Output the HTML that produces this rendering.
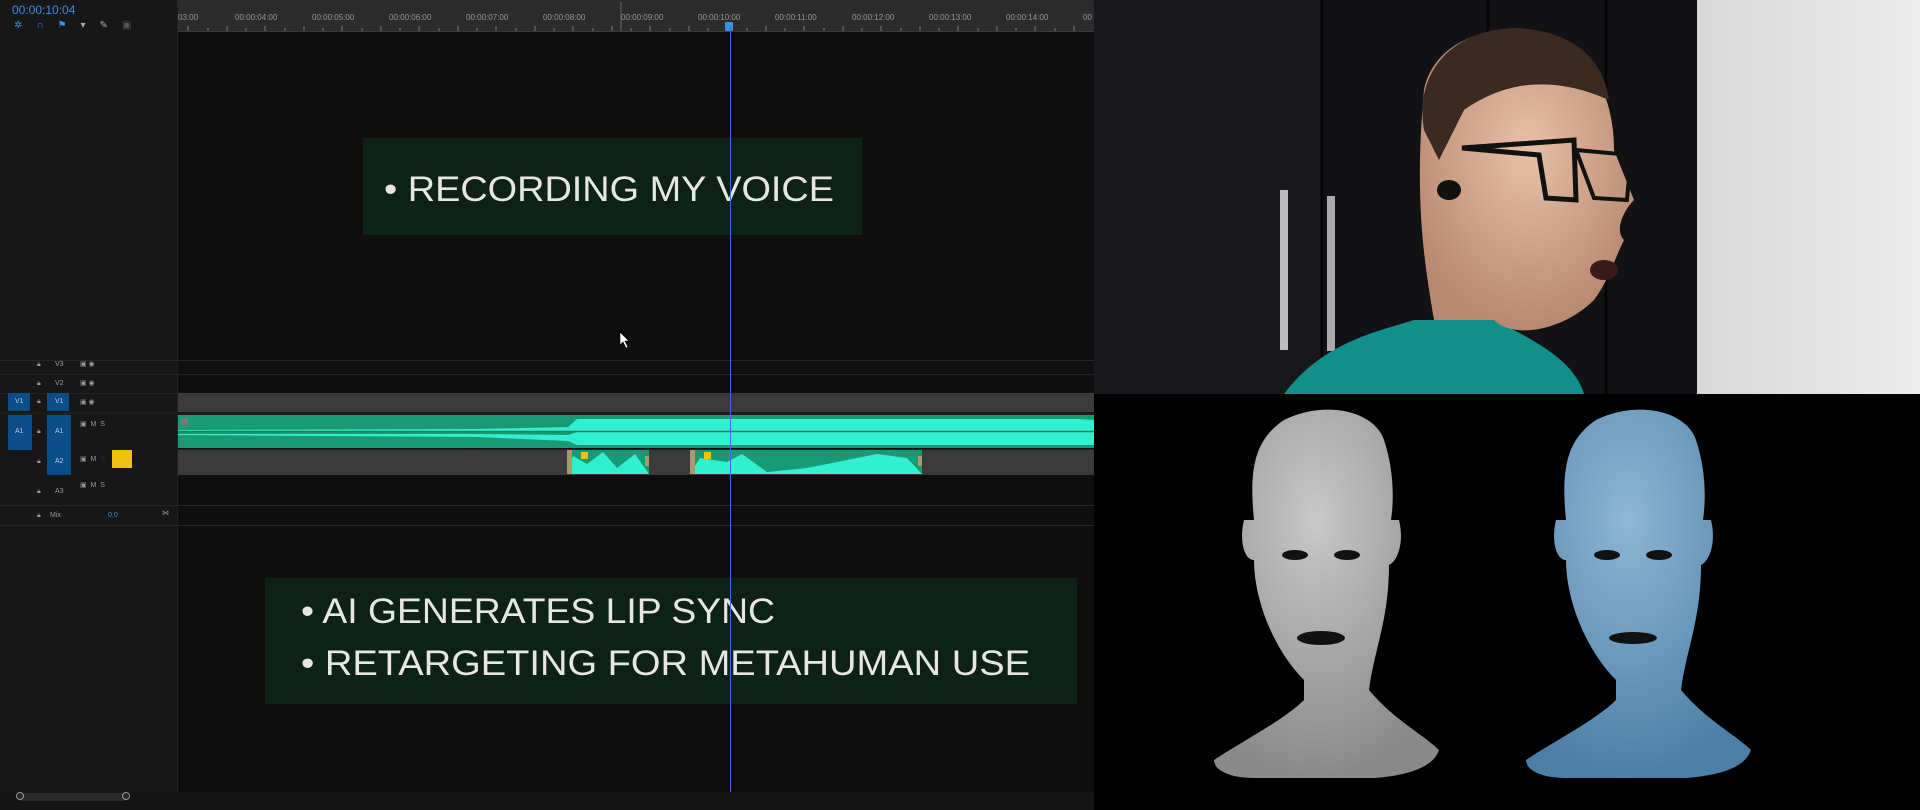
<!DOCTYPE html>
<html><head><meta charset="utf-8"><style>
*{margin:0;padding:0;box-sizing:border-box}
body{width:1920px;height:810px;background:#0e0e0e;overflow:hidden;position:relative;font-family:"Liberation Sans",sans-serif}
.abs{position:absolute}
</style></head><body>
<div class="abs" style="left:0;top:0;width:178px;height:810px;background:#171717;border-right:1px solid #222"></div>
<div class="abs" style="left:12px;top:3px;color:#3b8fe0;font-size:12px">00:00:10:04</div>
<div class="abs" style="left:14px;top:20px;color:#3b8fe0;font-size:10px;letter-spacing:14px">✲∩⚑<span style="color:#aaa">▾✎</span><span style="color:#555">▣</span></div>
<div class="abs" style="left:178px;top:0;width:916px;height:32px;background:#2b2b2b;border-bottom:1px solid #3a3a3a"></div>
<svg class="abs" style="left:178px;top:0" width="916" height="32">
<g fill="#999" font-size="8" font-family="Liberation Sans">
<text x="0" y="20">03:00</text><text x="57" y="20">00:00:04:00</text><text x="134" y="20">00:00:05:00</text><text x="211" y="20">00:00:06:00</text><text x="288" y="20">00:00:07:00</text><text x="365" y="20">00:00:08:00</text><text x="443" y="20">00:00:09:00</text><text x="520" y="20">00:00:10:00</text><text x="597" y="20">00:00:11:00</text><text x="674" y="20">00:00:12:00</text><text x="751" y="20">00:00:13:00</text><text x="828" y="20">00:00:14:00</text><text x="905" y="20">00</text>
</g>
<g stroke="#777"><path d="M10 26v5M30 28v3M49 26v5M68 28v3M87 26v5M107 28v3M126 26v5M145 28v3M164 26v5M184 28v3M203 26v5M222 28v3M241 26v5M261 28v3M280 26v5M299 28v3M318 26v5M338 28v3M357 26v5M376 28v3M395 26v5M415 28v3M434 26v5M453 28v3M472 26v5M492 28v3M511 26v5M530 28v3M549 26v5M569 28v3M588 26v5M607 28v3M626 26v5M646 28v3M665 26v5M684 28v3M703 26v5M723 28v3M742 26v5M761 28v3M780 26v5M800 28v3M819 26v5M838 28v3M857 26v5M877 28v3M896 26v5"/></g>
<line x1="443" y1="2" x2="443" y2="31" stroke="#666"/>
<rect x="547" y="22" width="8" height="9" rx="1" fill="#3b8fe0"/>
</svg>
<div class="abs" style="left:0;top:360px;width:1094px;height:1px;background:#262626"></div>
<div class="abs" style="left:0;top:374px;width:1094px;height:1px;background:#222"></div>
<div class="abs" style="left:0;top:393px;width:1094px;height:1px;background:#222"></div>
<div class="abs" style="left:178px;top:393px;width:916px;height:19px;background:#3a3a3a"></div>
<div class="abs" style="left:0;top:412px;width:1094px;height:3px;background:#1c1c1c"></div>
<div class="abs" style="left:178px;top:415px;width:916px;height:33px;background:#1a9a74"></div>
<svg class="abs" style="left:178px;top:415px" width="916" height="33">
<path d="M0 15 L300 14 L390 12 L399 4 L900 4 L916 5 V16 H0Z" fill="#30f0d0"/>
<path d="M0 18 L0 19 L300 19 L390 20 L399 17 L916 17 V30 L399 30 L390 26 L300 22 L0 20Z" fill="#30f0d0"/>
<line x1="0" y1="16.5" x2="916" y2="16.5" stroke="#138060" stroke-width="1.5"/>
<rect x="3" y="3" width="7" height="7" fill="#777"/>
</svg>
<div class="abs" style="left:178px;top:450px;width:916px;height:25px;background:#3a3a3a"></div>
<div class="abs" style="left:178px;top:449px;width:916px;height:1px;background:#222"></div>
<svg class="abs" style="left:567px;top:450px" width="360" height="25">
<rect x="0" y="0" width="82" height="24" fill="#1a9a74"/>
<path d="M0 24 L6 6 L20 14 L36 2 L50 18 L68 4 L82 24Z" fill="#30f0d0"/>
<rect x="123" y="0" width="232" height="24" fill="#1a9a74"/>
<path d="M123 24 L133 8 L160 12 L175 4 L200 22 L240 18 L280 10 L310 4 L340 8 L355 24Z" fill="#30f0d0"/>
<rect x="0" y="0" width="5" height="24" fill="#a89a6a"/><rect x="78" y="6" width="4" height="10" fill="#a89a6a"/>
<rect x="123" y="0" width="5" height="24" fill="#a89a6a"/><rect x="351" y="6" width="4" height="10" fill="#a89a6a"/>
<rect x="14" y="2" width="7" height="7" fill="#f0c010"/><rect x="137" y="2" width="7" height="7" fill="#f0c010"/>
</svg>
<div class="abs" style="left:0;top:505px;width:1094px;height:1px;background:#262626"></div>
<div class="abs" style="left:0;top:525px;width:1094px;height:1px;background:#262626"></div>
<div class="abs" style="left:8px;top:393px;width:22px;height:18px;background:#0a4d88"></div>
<div class="abs" style="left:47px;top:393px;width:22px;height:18px;background:#0a4d88"></div>
<div class="abs" style="left:8px;top:415px;width:24px;height:35px;background:#0a4d88"></div>
<div class="abs" style="left:47px;top:415px;width:24px;height:60px;background:#0a4d88"></div>
<div class="abs" style="left:112px;top:450px;width:20px;height:18px;background:#f0c010"></div>
<div class="abs" style="left:0;top:0;font-size:7px;color:#999;width:178px;height:810px">
<span class="abs" style="left:37px;top:361px">🔒︎</span><span class="abs" style="left:55px;top:361px">V3</span><span class="abs" style="left:80px;top:360px">▣ ◉</span>
<span class="abs" style="left:37px;top:380px">🔒︎</span><span class="abs" style="left:55px;top:380px">V2</span><span class="abs" style="left:80px;top:379px">▣ ◉</span>
<span class="abs" style="left:15px;top:398px;color:#bcd">V1</span><span class="abs" style="left:37px;top:398px">🔒︎</span><span class="abs" style="left:55px;top:398px;color:#bcd">V1</span><span class="abs" style="left:80px;top:398px">▣ ◉</span>
<span class="abs" style="left:15px;top:428px;color:#bcd">A1</span><span class="abs" style="left:37px;top:428px">🔒︎</span><span class="abs" style="left:55px;top:428px;color:#bcd">A1</span><span class="abs" style="left:80px;top:420px">▣ &nbsp;M &nbsp;S</span>
<span class="abs" style="left:37px;top:458px">🔒︎</span><span class="abs" style="left:55px;top:458px;color:#bcd">A2</span><span class="abs" style="left:80px;top:455px">▣ &nbsp;M &nbsp;<span style="color:#333">S</span></span>
<span class="abs" style="left:37px;top:488px">🔒︎</span><span class="abs" style="left:55px;top:488px">A3</span><span class="abs" style="left:80px;top:481px">▣ &nbsp;M &nbsp;S</span>
<span class="abs" style="left:37px;top:512px">🔒︎</span><span class="abs" style="left:50px;top:512px">Mix</span><span class="abs" style="left:108px;top:512px;color:#3b8fe0">0,0</span><span class="abs" style="left:162px;top:509px">⋈</span>
</div>
<div class="abs" style="left:0;top:792px;width:1094px;height:18px;background:#141414"></div>
<div class="abs" style="left:18px;top:793px;width:110px;height:8px;background:#2a2a2a;border-radius:4px"></div>
<div class="abs" style="left:16px;top:792px;width:8px;height:8px;border:1px solid #999;border-radius:50%"></div>
<div class="abs" style="left:122px;top:792px;width:8px;height:8px;border:1px solid #999;border-radius:50%"></div>
<svg class="abs" style="left:0;top:0" width="1094" height="810">
<rect x="363" y="138" width="499" height="97" fill="#0e2116"/>
<rect x="265" y="578" width="812" height="126" fill="#0e2116"/>
<g fill="#e6e6e6" font-family="Liberation Sans" font-size="35">
<text x="384" y="201" textLength="450" lengthAdjust="spacingAndGlyphs">• RECORDING MY VOICE</text>
<text x="301" y="623" textLength="474" lengthAdjust="spacingAndGlyphs">• AI GENERATES LIP SYNC</text>
<text x="301" y="675" textLength="729" lengthAdjust="spacingAndGlyphs">• RETARGETING FOR METAHUMAN USE</text>
</g>
<line x1="730.5" y1="26" x2="730.5" y2="792" stroke="#3b6fd0" stroke-width="1"/>
<path d="M620 332 l0 13 l3 -3 l3 6 l2 -1 l-3 -6 l4 0z" fill="#fff" stroke="#000" stroke-width="0.6"/>
</svg>
<svg class="abs" style="left:1094px;top:0" width="826" height="810">
<defs>
<linearGradient id="wall" x1="0" x2="1"><stop offset="0" stop-color="#d8d8d8"/><stop offset="1" stop-color="#ececec"/></linearGradient>
<radialGradient id="gh" cx="0.45" cy="0.3" r="0.7"><stop offset="0" stop-color="#c8c8c8"/><stop offset="1" stop-color="#8a8a8a"/></radialGradient>
<radialGradient id="bh" cx="0.45" cy="0.3" r="0.7"><stop offset="0" stop-color="#8fb6d4"/><stop offset="1" stop-color="#4d7fa6"/></radialGradient>
<radialGradient id="skin" cx="0.5" cy="0.4" r="0.6"><stop offset="0" stop-color="#e8c0a8"/><stop offset="1" stop-color="#b88870"/></radialGradient>
</defs>
<rect width="826" height="394" fill="#121214"/>
<rect x="0" y="0" width="230" height="394" fill="#18181b"/>
<line x1="228" y1="0" x2="228" y2="394" stroke="#050505" stroke-width="3"/>
<line x1="394" y1="0" x2="394" y2="394" stroke="#050505" stroke-width="3"/>
<line x1="512" y1="0" x2="512" y2="394" stroke="#050505" stroke-width="3"/>
<rect x="603" y="0" width="223" height="394" fill="url(#wall)"/>
<rect x="186" y="190" width="8" height="160" fill="#bbb"/>
<rect x="233" y="196" width="8" height="155" fill="#aaa"/>
<path d="M190 394 C230 340 290 330 320 320 L400 320 C440 340 480 360 490 394Z" fill="#138f8a"/>
<path d="M330 90 C340 40 400 20 450 35 C500 50 520 100 520 150 L540 200 C530 210 520 230 530 240 C520 260 515 280 500 300 C470 330 420 340 400 320 L340 320 C330 260 320 200 330 90Z" fill="url(#skin)"/>
<path d="M330 130 C320 70 360 30 420 28 C480 30 510 60 515 100 C470 80 420 75 370 110 L345 160Z" fill="#3a2a22"/>
<path d="M368 148 L480 140 L482 200 L452 198 L445 155Z" fill="none" stroke="#111" stroke-width="5"/>
<path d="M482 150 L537 155 L533 200 L500 198Z" fill="none" stroke="#111" stroke-width="4"/>
<ellipse cx="355" cy="190" rx="12" ry="10" fill="#111"/>
<ellipse cx="510" cy="270" rx="14" ry="10" fill="#3a1a1a"/>
<rect y="394" width="826" height="416" fill="#000"/>
<g>
<path d="M120 760 C150 740 190 720 210 700 L210 680 C180 650 160 600 160 560 C150 560 145 540 150 520 L160 520 C155 470 160 440 190 420 C230 400 280 410 290 440 C300 470 300 500 297 520 L305 520 C310 540 305 560 295 565 C295 620 280 650 275 690 C300 720 330 735 345 750 C340 765 320 775 280 778 L160 778 C135 778 120 770 120 760Z" fill="url(#gh)"/>
<ellipse cx="201" cy="555" rx="13" ry="5" fill="#111"/><ellipse cx="253" cy="555" rx="13" ry="5" fill="#111"/>
<ellipse cx="227" cy="638" rx="24" ry="7" fill="#111"/>
</g>
<g transform="translate(312,0)">
<path d="M120 760 C150 740 190 720 210 700 L210 680 C180 650 160 600 160 560 C150 560 145 540 150 520 L160 520 C155 470 160 440 190 420 C230 400 280 410 290 440 C300 470 300 500 297 520 L305 520 C310 540 305 560 295 565 C295 620 280 650 275 690 C300 720 330 735 345 750 C340 765 320 775 280 778 L160 778 C135 778 120 770 120 760Z" fill="url(#bh)"/>
<ellipse cx="201" cy="555" rx="13" ry="5" fill="#111"/><ellipse cx="253" cy="555" rx="13" ry="5" fill="#111"/>
<ellipse cx="227" cy="638" rx="24" ry="6" fill="#111"/>
</g>
</svg>
</body></html>
